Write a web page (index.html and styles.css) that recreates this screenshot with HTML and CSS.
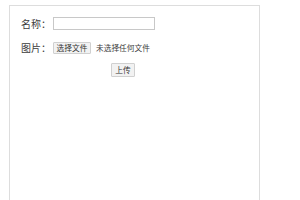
FILE: index.html
```html
<!DOCTYPE html>
<html lang="zh-CN">
<head>
    <meta charset="UTF-8">
    <title>上传图片</title>
    <link rel="stylesheet" href="styles.css">
</head>
<body>
    <div class="panel">
        <form class="upload-form">
            <div class="row">
                <label class="label">名称<span class="colon">：</span></label>
                <input class="text-input" type="text" name="name">
            </div>
            <div class="row">
                <label class="label">图片<span class="colon">：</span></label>
                <button type="button" class="btn file-btn">选择文件</button>
                <span class="file-name">未选择任何文件</span>
            </div>
            <div class="row submit-row">
                <button type="button" class="btn submit-btn">上传</button>
            </div>
        </form>
    </div>
</body>
</html>
```

FILE: styles.css
```css
html, body {
    margin: 0;
    background: #fff;
    font-family: "Noto Sans CJK SC", "Microsoft YaHei", sans-serif;
    color: #3c3c3c;
    overflow: hidden;
}

.panel {
    margin: 5px 0 0 9px;
    width: 249px;
    height: 220px;
    border: 1px solid #ddd;
}

.upload-form {
    padding: 11px 0 0 11px;
    display: flex;
    flex-direction: column;
    gap: 11px;
}

.row {
    display: flex;
    align-items: center;
    height: 13px;
}

.label {
    width: 32px;
    font-size: 10px;
    line-height: 13px;
    white-space: nowrap;
}

.colon {
    font-family: "Noto Sans CJK JP", sans-serif;
}

.text-input {
    width: 102px;
    height: 13px;
    box-sizing: border-box;
    margin: 0;
    padding: 0 2px;
    border: 1px solid #c8c8c8;
    font-size: 8px;
    outline: none;
}

.btn {
    margin: 0;
    padding: 0;
    height: 12px;
    box-sizing: border-box;
    border: 1px solid #d0d0d0;
    border-radius: 1px;
    background: #f2f2f2;
    font-family: inherit;
    font-size: 7.7px;
    line-height: 10px;
    color: #333;
}

.file-btn {
    width: 38px;
}

.file-name {
    margin-left: 5px;
    font-size: 7.7px;
    white-space: nowrap;
}

.submit-row {
    margin-top: -2px;
    height: 14px;
    padding-left: 90px;
}

.submit-btn {
    width: 24px;
    height: 14px;
}
```
